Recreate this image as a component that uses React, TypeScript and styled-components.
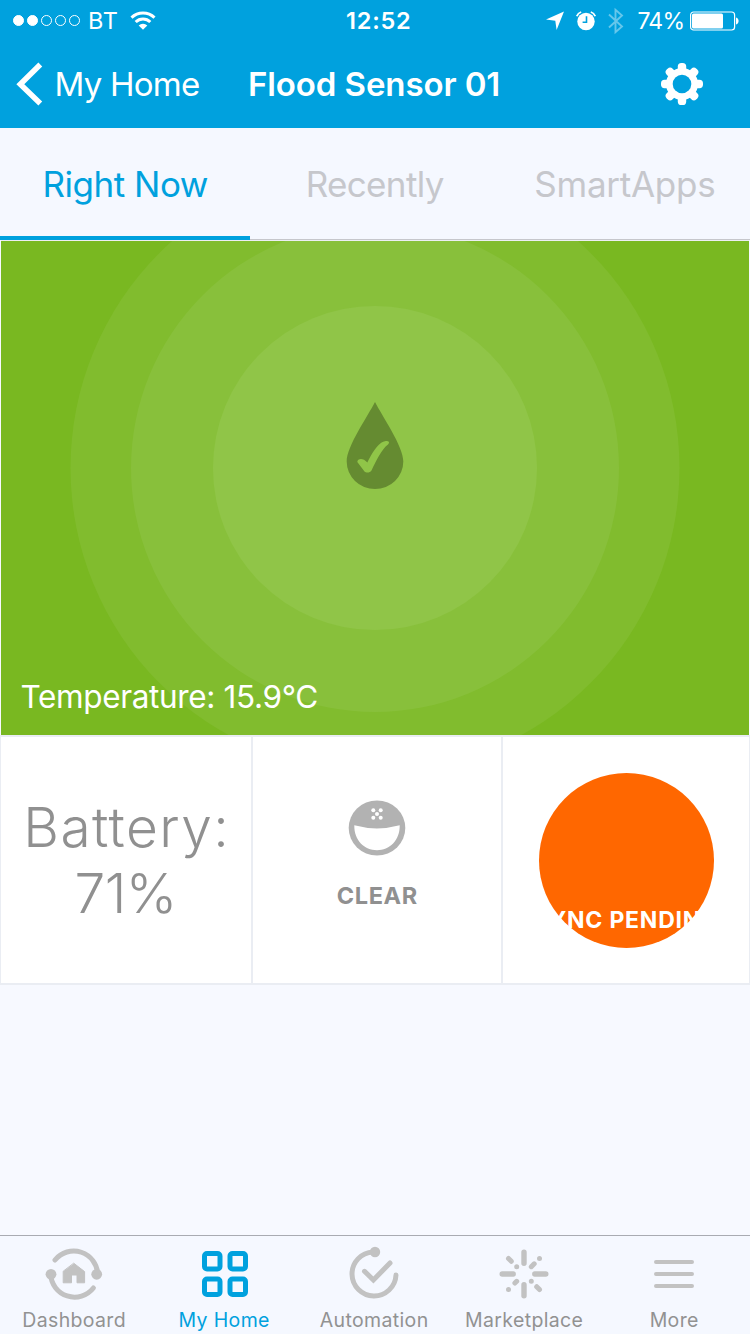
import React from "react";
import styled, { createGlobalStyle } from "styled-components";

const BLUE = "#00a1de";

const GlobalStyle = createGlobalStyle`
  *, *::before, *::after { box-sizing: border-box; }
  body { margin: 0; background: #f7f9ff; font-family: Inter, "Liberation Sans", sans-serif; }
  svg { display: block; flex: none; }
`;

const Screen = styled.div`
  display: flex;
  flex-direction: column;
  width: 750px;
  height: 1334px;
  overflow: hidden;
  background: #f7f9ff;
`;

const Label = styled.span<{ $size: number; $weight?: number; $track?: number }>`
  display: block;
  white-space: nowrap;
  font-size: ${(p) => p.$size}px;
  font-weight: ${(p) => p.$weight ?? 400};
  letter-spacing: ${(p) => p.$track ?? 0}px;
  margin-right: ${(p) => -(p.$track ?? 0)}px;
`;

const Header = styled.header`
  height: 128px;
  background: ${BLUE};
  color: #fff;
`;

const StatusBar = styled.div`
  display: grid;
  grid-template-columns: 333px auto 1fr;
  align-items: center;
  height: 40px;
  padding: 1px 10px 0 13px;
`;

const StatusSide = styled.div<{ $end?: boolean }>`
  display: flex;
  align-items: center;
  gap: ${(p) => (p.$end ? 11 : 12)}px;
  justify-content: ${(p) => (p.$end ? "flex-end" : "flex-start")};
`;

const Carrier = styled.div`
  display: flex;
  align-items: center;
  gap: 8px;
`;

const BatteryLevel = styled.div`
  display: flex;
  align-items: center;
  gap: 5px;
  padding-left: 1px;
`;

const SignalDots = styled.div`
  display: flex;
  gap: 3px;
`;

const SignalDot = styled.i<{ $on: boolean }>`
  width: 11px;
  height: 11px;
  border-radius: 50%;
  border: 1px solid #fff;
  background: ${(p) => (p.$on ? "#fff" : "transparent")};
`;

const NavBar = styled.nav`
  display: grid;
  grid-template-columns: 232px 1fr auto;
  align-items: center;
  height: 88px;
  padding: 0 46px 0 16px;
`;

const BackButton = styled.button`
  display: flex;
  align-items: center;
  gap: 10.5px;
  padding: 0;
  border: 0;
  background: none;
  color: inherit;
  font-family: inherit;
`;

const SettingsButton = styled.button`
  padding: 0;
  border: 0;
  background: none;
`;

const Tabs = styled.div`
  display: grid;
  grid-template-columns: repeat(3, 1fr);
  height: 112px;
  background: #f5f8ff;
`;

const Tab = styled.button<{ $active?: boolean }>`
  display: flex;
  align-items: center;
  justify-content: center;
  padding: ${(p) => (p.$active ? "3px 0 0 1px" : "0")};
  border: 0;
  border-bottom: ${(p) => (p.$active ? `4px solid ${BLUE}` : "1px solid #c6c7cc")};
  background: none;
  color: ${(p) => (p.$active ? BLUE : "#c6c7cc")};
  font-family: inherit;
`;

const Hero = styled.section`
  position: relative;
  display: flex;
  flex-direction: column;
  justify-content: flex-end;
  height: 495px;
  margin: 0 1px;
  padding: 0 0 19px 19.5px;
  border-top: 1px solid #eceef3;
  background: #79b821;
  color: #fff;
`;

const HeroArt = styled.svg`
  position: absolute;
  top: 0;
  left: 0;
`;

const HeroCaption = styled.div`
  position: relative;
`;

const Tiles = styled.section`
  display: grid;
  grid-template-columns: 250px 248px 246px;
  gap: 2px;
  height: 250px;
  padding: 2px 1px;
  background: #eaedf3;
`;

const Tile = styled.div`
  display: flex;
  flex-direction: column;
  align-items: center;
  justify-content: center;
  background: #fff;
  color: #909090;
`;

const BatteryText = styled.div`
  display: flex;
  flex-direction: column;
  align-items: center;
  line-height: 66px;
`;

const ClearState = styled.div`
  display: flex;
  flex-direction: column;
  align-items: center;
  gap: 25px;
  padding-bottom: 10px;
`;

const SyncBadge = styled.div`
  display: flex;
  align-items: flex-end;
  justify-content: center;
  width: 175px;
  height: 175px;
  padding-bottom: 14px;
  border-radius: 50%;
  background: #ff6700;
  color: #fff;
`;

const Spacer = styled.div`
  flex: 1;
`;

const TabBar = styled.nav`
  display: grid;
  grid-template-columns: repeat(5, 150px);
  height: 99px;
  border-top: 1px solid #a9abb2;
  background: #f5f8ff;
`;

const TabBarItem = styled.a<{ $active?: boolean }>`
  display: flex;
  flex-direction: column;
  align-items: center;
  padding: 8px 2px 0 0;
  color: ${(p) => (p.$active ? BLUE : "#929292")};
`;

const IconSlot = styled.div<{ $active?: boolean }>`
  height: 64px;
  color: ${(p) => (p.$active ? BLUE : "#c2c2c2")};
`;

const WifiIcon = () => (
  <svg width="26" height="20" viewBox="0 0 26 20" fill="none" stroke="#fff">
    <path d="M1.5 6.6a16.5 16.5 0 0 1 23 0" strokeWidth="3" />
    <path d="M5.7 11a10.4 10.4 0 0 1 14.6 0" strokeWidth="3" />
    <path d="M13 18.8l-4.3-4.4a6.1 6.1 0 0 1 8.6 0z" fill="#fff" stroke="none" />
  </svg>
);

const LocationIcon = () => (
  <svg width="20" height="20" viewBox="0 0 20 20">
    <path d="M19 .5L11.600 19 10.300 9.800 1 8.600z" fill="#fff" />
  </svg>
);

const AlarmIcon = () => (
  <svg width="20" height="20" viewBox="0 0 20 20">
    <circle cx="10" cy="10.500" r="8.700" fill="#fff" />
    <path d="M.8 5.200A7 7 0 0 1 5.200 1M19.200 5.200A7 7 0 0 0 14.800 1" stroke="#fff" strokeWidth="1.800" fill="none" />
    <path d="M10.500 5.200v6H6.600" stroke={BLUE} strokeWidth="1.600" fill="none" />
  </svg>
);

const BluetoothIcon = () => (
  <svg width="18" height="28" viewBox="0 0 18 28" fill="none" stroke="#66c7eb" strokeWidth="1.900">
    <path d="M2 7.500l13 12-6.500 5.700V2.800L15 8.500l-13 12" />
  </svg>
);

const BatteryIcon = () => (
  <svg width="50" height="20" viewBox="0 0 50 20">
    <rect x=".6" y="1" width="44" height="18" rx="3" fill="none" stroke="#fff" strokeWidth="1.200" />
    <rect x="2" y="2.500" width="31" height="15" rx="1.500" fill="#fff" />
    <path d="M46 6.500c3.400.6 3.400 6.400 0 7z" fill="#fff" />
  </svg>
);

const BackIcon = () => (
  <svg width="28" height="44" viewBox="0 0 28 44">
    <path d="M24.300 2.500L4.300 22.200 24.300 41.500" fill="none" stroke="#fff" strokeWidth="5.500" />
  </svg>
);

const GearIcon = () => (
  <svg width="44" height="44" viewBox="-22 -22 44 44">
    {[0, 45, 90, 135].map((angle) => (
      <rect key={angle} x="-4.200" y="-21" width="8.400" height="42" rx="3.600" fill="#fff" transform={`rotate(${angle})`} />
    ))}
    <circle r="16" fill="#fff" />
    <circle r="9.300" fill={BLUE} />
  </svg>
);

const FoodIcon = () => (
  <svg width="58" height="56" viewBox="0 0 58 56">
    <ellipse cx="29" cy="28" rx="28.300" ry="27.500" fill="#b2b2b2" />
    <path d="M6.300 25.300Q29 31.500 51.700 25.300C52 40.500 41.500 50.200 29 50.200S6 40.500 6.300 25.300z" fill="#fff" />
    {[[25.300, 10.300], [32.700, 10.300], [29, 14], [25.300, 17.700], [32.700, 17.700]].map(([x, y]) => (
      <circle key={`${x}-${y}`} cx={x} cy={y} r="2" fill="#fff" />
    ))}
  </svg>
);

const DashboardIcon = () => (
  <svg width="58" height="58" viewBox="0 0 58 58" fill="none" stroke="currentColor" strokeWidth="5" strokeLinecap="round">
    <path d="M10 16A24 24 0 0 1 52.700 30.200" />
    <path d="M5.600 30.200A24 24 0 0 0 48.400 44" />
    <circle cx="6" cy="30.300" r="5.400" fill="currentColor" stroke="none" />
    <circle cx="51.700" cy="30.300" r="5.400" fill="currentColor" stroke="none" />
    <path d="M29 19.400L39.600 27.600V38.800H32V31H26.500V38.800H18.200V27.600z" fill="currentColor" strokeWidth="1" strokeLinejoin="round" />
  </svg>
);

const HomeIcon = () => (
  <svg width="48" height="56" viewBox="0 0 48 56" fill="none" stroke="currentColor" strokeWidth="5">
    {[[2, 7], [27.500, 7], [2, 32.500], [27.500, 32.500]].map(([x, y]) => (
      <rect key={`${x}-${y}`} x={x + 2.500} y={y + 2.500} width="15.500" height="15.500" rx="2.500" />
    ))}
  </svg>
);

const AutomationIcon = () => (
  <svg width="50" height="56" viewBox="0 0 50 56" fill="none" stroke="currentColor" strokeWidth="5" strokeLinecap="round">
    <path d="M24 8A22 22 0 1 0 47 31" />
    <circle cx="26" cy="8" r="5.200" fill="currentColor" stroke="none" />
    <path d="M15.500 27.300l8.900 8.700L41 19" />
  </svg>
);

const MarketplaceIcon = () => (
  <svg width="50" height="56" viewBox="-25 -30 50 56" stroke="currentColor" strokeWidth="5.400" strokeLinecap="round">
    <path d="M0-21.800v11M0 21.800v-11M-21.800 0h11M21.800 0h-11" />
    <path d="M-15.500-15.500l2.800 2.800M-7.300-7.300h.01M15.500-15.500h.01M7.300-7.300l2.900-2.900M7.300 7.300h.01M12.700 12.700l2.800 2.800M-7.300 7.300l-1.800 1.800M-15.500 15.500h.01" strokeWidth="5" />
  </svg>
);

const MoreIcon = () => (
  <svg width="40" height="56" viewBox="0 0 40 56" stroke="currentColor" strokeWidth="4" strokeLinecap="round">
    <path d="M2 18h36M2 30h36M2 42h36" />
  </svg>
);

const HeroIllustration = () => (
  <HeroArt width="748" height="494" viewBox="1 241 748 494">
    <circle cx="375" cy="468" r="304.500" fill="#81bc2e" />
    <circle cx="375" cy="468" r="244" fill="#88c03b" />
    <circle cx="375" cy="468" r="162" fill="#90c548" />
    <path d="M375 402C382 416 403.300 446 403.300 461.500a28.200 27.500 0 0 1-56.600 0C346.700 446 368 416 375 402z" fill="#658b31" />
    <path d="M357.300 462C357.500 458.500 363 457.500 367.300 462.500 377 443 383 440.800 387 441 389.500 441.300 389.500 443 388 444.500C381.500 449.500 376.500 460 371.500 470.500 369.500 473.300 366 472.800 364.500 471.500z" fill="#90c548" />
  </HeroArt>
);

const tabBarItems = [
  { label: "Dashboard", icon: <DashboardIcon /> },
  { label: "My Home", icon: <HomeIcon />, active: true },
  { label: "Automation", icon: <AutomationIcon /> },
  { label: "Marketplace", icon: <MarketplaceIcon /> },
  { label: "More", icon: <MoreIcon /> },
];

export default function App() {
  return (
    <Screen>
      <GlobalStyle />
      <Header>
        <StatusBar>
          <StatusSide>
            <Carrier>
              <SignalDots>
                {[true, true, false, false, false].map((on, i) => (
                  <SignalDot key={i} $on={on} />
                ))}
              </SignalDots>
              <Label $size={23.5} $track={0.8}>BT</Label>
            </Carrier>
            <WifiIcon />
          </StatusSide>
          <Label $size={23.5} $weight={600} $track={0.8}>12:52</Label>
          <StatusSide $end>
            <LocationIcon />
            <AlarmIcon />
            <BluetoothIcon />
            <BatteryLevel>
              <Label $size={23} $track={-0.8}>74%</Label>
              <BatteryIcon />
            </BatteryLevel>
          </StatusSide>
        </StatusBar>
        <NavBar>
          <BackButton>
            <BackIcon />
            <Label $size={33} $track={-0.75}>My Home</Label>
          </BackButton>
          <Label $size={33} $weight={600} $track={-0.1}>Flood Sensor 01</Label>
          <SettingsButton aria-label="Settings">
            <GearIcon />
          </SettingsButton>
        </NavBar>
      </Header>
      <Tabs>
        <Tab $active>
          <Label $size={35} $track={-0.5}>Right Now</Label>
        </Tab>
        <Tab>
          <Label $size={35} $track={-0.65}>Recently</Label>
        </Tab>
        <Tab>
          <Label $size={35} $track={-0.25}>SmartApps</Label>
        </Tab>
      </Tabs>
      <Hero>
        <HeroIllustration />
        <HeroCaption>
          <Label $size={31.5} $track={-0.35}>Temperature: 15.9°C</Label>
        </HeroCaption>
      </Hero>
      <Tiles>
        <Tile>
          <BatteryText>
            <Label $size={55} $weight={300} $track={1.4}>Battery:</Label>
            <Label $size={55} $weight={300} $track={-0.6}>71%</Label>
          </BatteryText>
        </Tile>
        <Tile>
          <ClearState>
            <FoodIcon />
            <Label $size={23.5} $weight={700} $track={0.6}>CLEAR</Label>
          </ClearState>
        </Tile>
        <Tile>
          <SyncBadge>
            <Label $size={23} $weight={700} $track={0.8}>SYNC PENDING</Label>
          </SyncBadge>
        </Tile>
      </Tiles>
      <Spacer />
      <TabBar>
        {tabBarItems.map((item) => (
          <TabBarItem key={item.label} $active={item.active}>
            <IconSlot $active={item.active}>{item.icon}</IconSlot>
            <Label $size={19.5} $track={0.35}>{item.label}</Label>
          </TabBarItem>
        ))}
      </TabBar>
    </Screen>
  );
}
